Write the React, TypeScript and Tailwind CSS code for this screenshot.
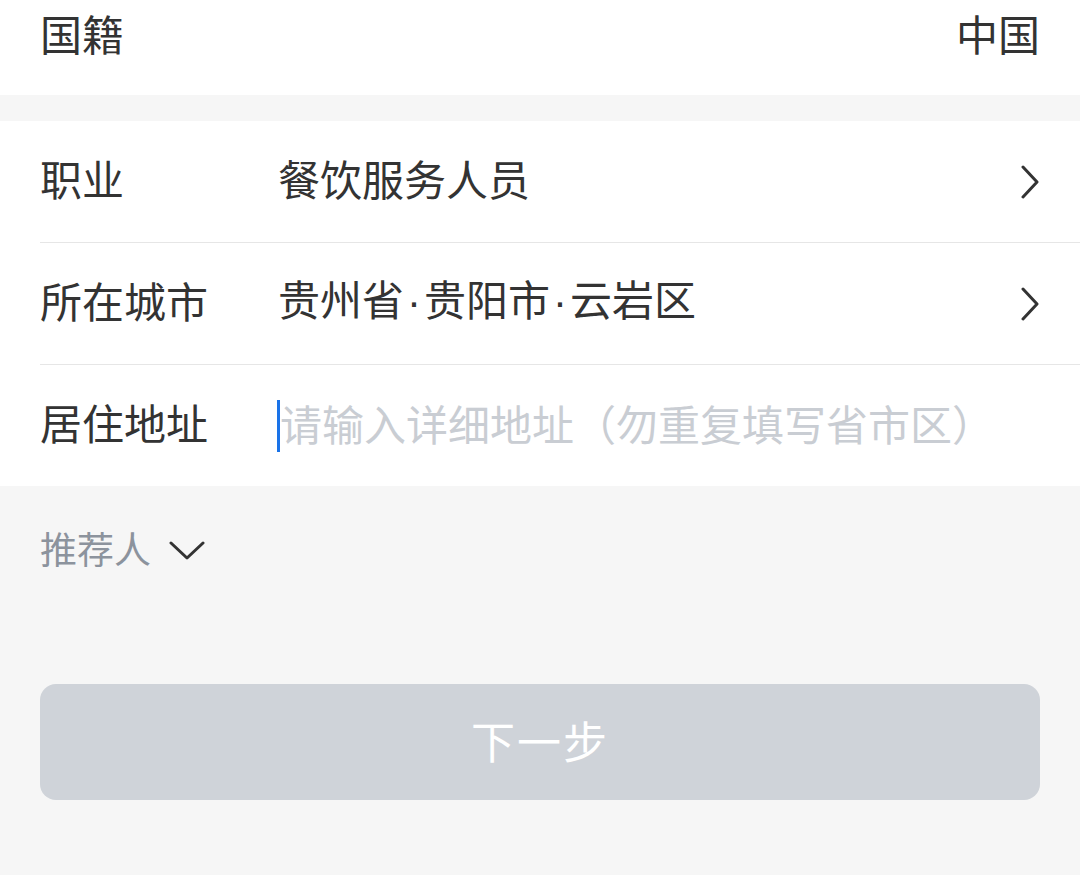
const font = "font-['Noto_Sans_CJK_SC','Noto_Sans',sans-serif]";

function ChevronRight() {
  return (
    <svg width="20" height="34" viewBox="0 0 20 34" fill="none" aria-hidden="true">
      <path d="M3 2L17 17L3 32" stroke="#333333" strokeWidth="3" strokeLinecap="round" strokeLinejoin="round" />
    </svg>
  );
}

function ChevronDown() {
  return (
    <svg width="36" height="20" viewBox="0 0 36 20" fill="none" aria-hidden="true">
      <path d="M2 3L18 18L34 3" stroke="#333333" strokeWidth="3" strokeLinecap="round" strokeLinejoin="round" />
    </svg>
  );
}

function Dot() {
  return <span className="mx-[3px] font-['Liberation_Sans',sans-serif]">·</span>;
}

function Row({ label, children, last }: { label: string; children: React.ReactNode; last?: boolean }) {
  return (
    <div
      className={`flex items-center pr-[40px] ${last ? "h-[121px]" : "h-[122px] border-b border-[#e6e6e6]"}`}
    >
      <div className="w-[238px] shrink-0 pb-[8px] text-[42px] leading-[52px] text-[#333333]">{label}</div>
      <div className="flex flex-1 items-center">{children}</div>
    </div>
  );
}

export default function App() {
  return (
    <div className={`min-h-screen bg-[#f6f6f6] ${font}`}>
      {/* nationality */}
      <div className="flex h-[95px] items-start justify-between bg-white px-[40px] pt-[11px]">
        <span className="text-[42px] leading-[44px] text-[#333333]">国籍</span>
        <span className="text-[42px] leading-[44px] text-[#333333]">中国</span>
      </div>

      <div className="mt-[26px] bg-white pl-[40px]">
        <Row label="职业">
          <span className="flex-1 pb-[8px] text-[42px] leading-[52px] text-[#333333]">餐饮服务人员</span>
          <ChevronRight />
        </Row>
        <Row label="所在城市">
          <span className="flex-1 pb-[8px] text-[42px] leading-[52px] text-[#333333]">
            贵州省<Dot />贵阳市<Dot />云岩区
          </span>
          <ChevronRight />
        </Row>
        <Row label="居住地址" last>
          <span className="ml-[-1px] h-[52px] w-[3px] shrink-0 bg-[#1a73e8]" />
          <span className="pb-[6px] text-[42px] leading-[52px] text-[#c9cdd3]">请输入详细地址（勿重复填写省市区）</span>
        </Row>
      </div>

      {/* referrer */}
      <div className="flex items-center gap-[18px] px-[40px] pt-[42px]">
        <span className="pb-[4px] text-[37px] leading-[40px] text-[#8c939d]">推荐人</span>
        <ChevronDown />
      </div>

      <div className="px-[40px] pt-[112px]">
        <button
          type="button"
          className="flex h-[116px] w-full items-center justify-center rounded-[16px] bg-[#cfd3d9] pb-[4px] text-[44px] tracking-[2px] text-white"
        >
          下一步
        </button>
      </div>
    </div>
  );
}
